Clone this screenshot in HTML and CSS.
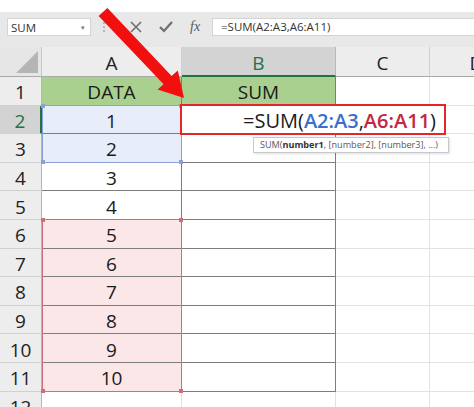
FILE: index.html
```html
<!DOCTYPE html>
<html lang="en">

<head>
    <meta charset="UTF-8">
    <meta name="viewport" content="width=device-width, initial-scale=1.0">
    <title>SUM of two ranges</title>
    <link rel="stylesheet" href="styles.css">
</head>

<body>
    <div class="top-gap"></div>

    <!-- Name box and formula bar -->
    <div class="toolbar">
        <div class="name-box">
            <span>SUM</span>
            <span class="drop">&#9662;</span>
        </div>
        <div class="bar-icons">
            <svg class="grip" width="4" height="12" viewBox="0 0 4 12">
                <circle cx="2" cy="2" r="1" />
                <circle cx="2" cy="6" r="1" />
                <circle cx="2" cy="10" r="1" />
            </svg>
            <svg class="icon" width="14" height="14" viewBox="0 0 14 14">
                <path d="M2 2 L12 12 M12 2 L2 12" />
            </svg>
            <svg class="icon" width="16" height="14" viewBox="0 0 16 14">
                <path d="M2 7 L6 11 L14 2" stroke-width="2.2" />
            </svg>
            <span class="fx">fx</span>
        </div>
        <div class="formula-input">=SUM(A2:A3,A6:A11)</div>
    </div>

    <!-- Worksheet -->
    <div class="sheet">
        <div class="grid">
            <div class="corner"><span class="tri"></span></div>
            <div class="hd">A</div>
            <div class="hd sel">B</div>
            <div class="hd">C</div>
            <div class="hd">D</div>

            <div class="rh">1</div>
            <div class="t green">DATA</div>
            <div class="t green">SUM</div>
            <div class="c"></div>
            <div class="c"></div>

            <div class="rh sel">2</div>
            <div class="t blue">1</div>
            <div class="t"></div>
            <div class="c"></div>
            <div class="c"></div>

            <div class="rh">3</div>
            <div class="t blue">2</div>
            <div class="t"></div>
            <div class="c"></div>
            <div class="c"></div>

            <div class="rh">4</div>
            <div class="t">3</div>
            <div class="t"></div>
            <div class="c"></div>
            <div class="c"></div>

            <div class="rh">5</div>
            <div class="t">4</div>
            <div class="t"></div>
            <div class="c"></div>
            <div class="c"></div>

            <div class="rh">6</div>
            <div class="t pink">5</div>
            <div class="t"></div>
            <div class="c"></div>
            <div class="c"></div>

            <div class="rh">7</div>
            <div class="t pink">6</div>
            <div class="t"></div>
            <div class="c"></div>
            <div class="c"></div>

            <div class="rh">8</div>
            <div class="t pink">7</div>
            <div class="t"></div>
            <div class="c"></div>
            <div class="c"></div>

            <div class="rh">9</div>
            <div class="t pink">8</div>
            <div class="t"></div>
            <div class="c"></div>
            <div class="c"></div>

            <div class="rh">10</div>
            <div class="t pink">9</div>
            <div class="t"></div>
            <div class="c"></div>
            <div class="c"></div>

            <div class="rh">11</div>
            <div class="t pink">10</div>
            <div class="t"></div>
            <div class="c"></div>
            <div class="c"></div>

            <div class="rh">12</div>
            <div class="c"></div>
            <div class="c"></div>
            <div class="c"></div>
            <div class="c"></div>
        </div>

        <!-- Range highlights drawn over the cells -->
        <div class="range range-blue">
            <i class="h tl"></i><i class="h tr"></i><i class="h bl"></i><i class="h br"></i>
        </div>
        <div class="range range-pink">
            <i class="h tl"></i><i class="h tr"></i><i class="h bl"></i><i class="h br"></i>
        </div>

        <!-- Cell being edited -->
        <div class="edit-cell">
            =SUM(<span class="ref-blue">A2:A3</span>,<span class="ref-red">A6:A11</span>)
        </div>

        <div class="tip">SUM(<b>number1</b>, [number2], [number3], ...)</div>
    </div>

    <!-- Pointer arrow -->
    <svg class="arrow" width="474" height="407" viewBox="0 0 474 407">
        <polygon points="107.4,7.9 171.6,76.1 177.8,70.6 184,98 157.6,89.6 163.6,84.3 98.6,16.1" />
    </svg>
</body>

</html>
```

FILE: styles.css
```css
/* Global Styles */
* {
    margin: 0;
    padding: 0;
    box-sizing: border-box;
}

body {
    width: 474px;
    height: 407px;
    overflow: hidden;
    background-color: #fff;
    color: #1a1a1a;
    font-family: 'Open Sans', 'Noto Sans', sans-serif;
    position: relative;
}

.top-gap {
    height: 12px;
}

/* Toolbar */
.toolbar {
    height: 35px;
    background-color: #e8e8e8;
    display: flex;
    align-items: center;
    padding-bottom: 5px;
}

.name-box {
    margin-left: 7px;
    width: 84px;
    height: 18px;
    background-color: #fff;
    border: 1px solid #d4d4d4;
    display: flex;
    align-items: center;
    justify-content: space-between;
    padding: 0 5px 0 3px;
    font-size: 11.5px;
    color: #333;
}

.name-box .drop {
    font-size: 7px;
    color: #777;
}

.bar-icons {
    width: 121px;
    display: flex;
    align-items: center;
    padding-left: 11px;
}

.grip {
    fill: #a6a6a6;
    margin-right: 23px;
}

.icon {
    fill: none;
    stroke: #6e6e6e;
    stroke-width: 1.6;
    margin-right: 15px;
}

.fx {
    font-family: 'Liberation Serif', serif;
    font-style: italic;
    font-size: 14px;
    color: #5a5a5a;
    margin-left: 1px;
}

.formula-input {
    flex: 1;
    height: 18px;
    background-color: #fff;
    border: 1px solid #d4d4d4;
    border-right: none;
    padding-left: 8px;
    font-size: 11.5px;
    line-height: 16px;
    color: #333;
}

/* Worksheet */
.sheet {
    position: relative;
}

.grid {
    display: grid;
    grid-template-columns: 42px 140px 154px 94px 94px;
    grid-template-rows: 30px repeat(12, 28.6px);
    font-size: 19px;
}

.grid > div {
    display: flex;
    align-items: center;
    justify-content: center;
    padding-top: 3px;
    white-space: nowrap;
}

.corner {
    background-color: #e6e6e6;
    border-right: 1px solid #c6c6c6;
    border-bottom: 1px solid #a9a9a9;
    position: relative;
}

.tri {
    position: absolute;
    right: 3px;
    bottom: 3px;
    width: 0;
    height: 0;
    border-left: 22px solid transparent;
    border-bottom: 22px solid #b5b5b5;
}

.hd {
    background-color: #ededed;
    border-right: 1px solid #cfcfcf;
    border-bottom: 1px solid #a9a9a9;
    color: #222;
}

.hd.sel {
    background-color: #d3d3d3;
    color: #217346;
    border-bottom: 2px solid #217346;
    border-right-color: #b8b8b8;
}

.rh {
    background-color: #ededed;
    border-right: 1px solid #b5b5b5;
    border-bottom: 1px solid #d0d0d0;
    color: #222;
}

.rh.sel {
    background-color: #d3d3d3;
    color: #217346;
    border-right: 2px solid #217346;
}

.c {
    border-right: 1px solid #e2e2e2;
    border-bottom: 1px solid #e2e2e2;
}

.t {
    border-right: 1px solid #7d7d7d;
    border-bottom: 1px solid #7d7d7d;
}

.green {
    background-color: #a9d08e;
}

.blue {
    background-color: #e8eef9;
}

.pink {
    background-color: #fbe6e8;
}

/* Range highlights */
.range {
    position: absolute;
    left: 42px;
    width: 140px;
}

.range-blue {
    top: 57.6px;
    height: 58.2px;
    border: 1px solid #8d9fd9;
}

.range-pink {
    top: 172px;
    height: 172.6px;
    border: 1px solid #c96f7d;
}

.h {
    position: absolute;
    width: 4px;
    height: 4px;
}

.range-blue .h {
    background-color: #8d9fd9;
}

.range-pink .h {
    background-color: #c96f7d;
}

.tl { left: -2px; top: -2px; }
.tr { right: -2px; top: -2px; }
.bl { left: -2px; bottom: -2px; }
.br { right: -2px; bottom: -2px; }

/* Edited cell */
.edit-cell {
    position: absolute;
    left: 180px;
    top: 57px;
    width: 266px;
    height: 31px;
    background-color: #fff;
    border: 2px solid #e3262c;
    display: flex;
    align-items: center;
    justify-content: flex-end;
    padding: 2px 8px 0 0;
    font-size: 20px;
    color: #1a1a1a;
    white-space: nowrap;
}

.ref-blue {
    color: #3a6fcc;
    font-weight: 600;
}

.ref-red {
    color: #c3283d;
    font-weight: 600;
}

.tip {
    position: absolute;
    left: 253px;
    top: 90px;
    width: 196px;
    height: 16px;
    background-color: #fff;
    border: 1px solid #c8c8c8;
    box-shadow: 1px 1px 2px rgba(0, 0, 0, 0.12);
    font-size: 9.1px;
    line-height: 14px;
    padding-left: 6px;
    color: #595959;
    white-space: nowrap;
    overflow: hidden;
}

.tip b {
    color: #333;
}

/* Arrow */
.arrow {
    position: absolute;
    left: 0;
    top: 0;
    fill: #f20f0f;
    pointer-events: none;
}
```
